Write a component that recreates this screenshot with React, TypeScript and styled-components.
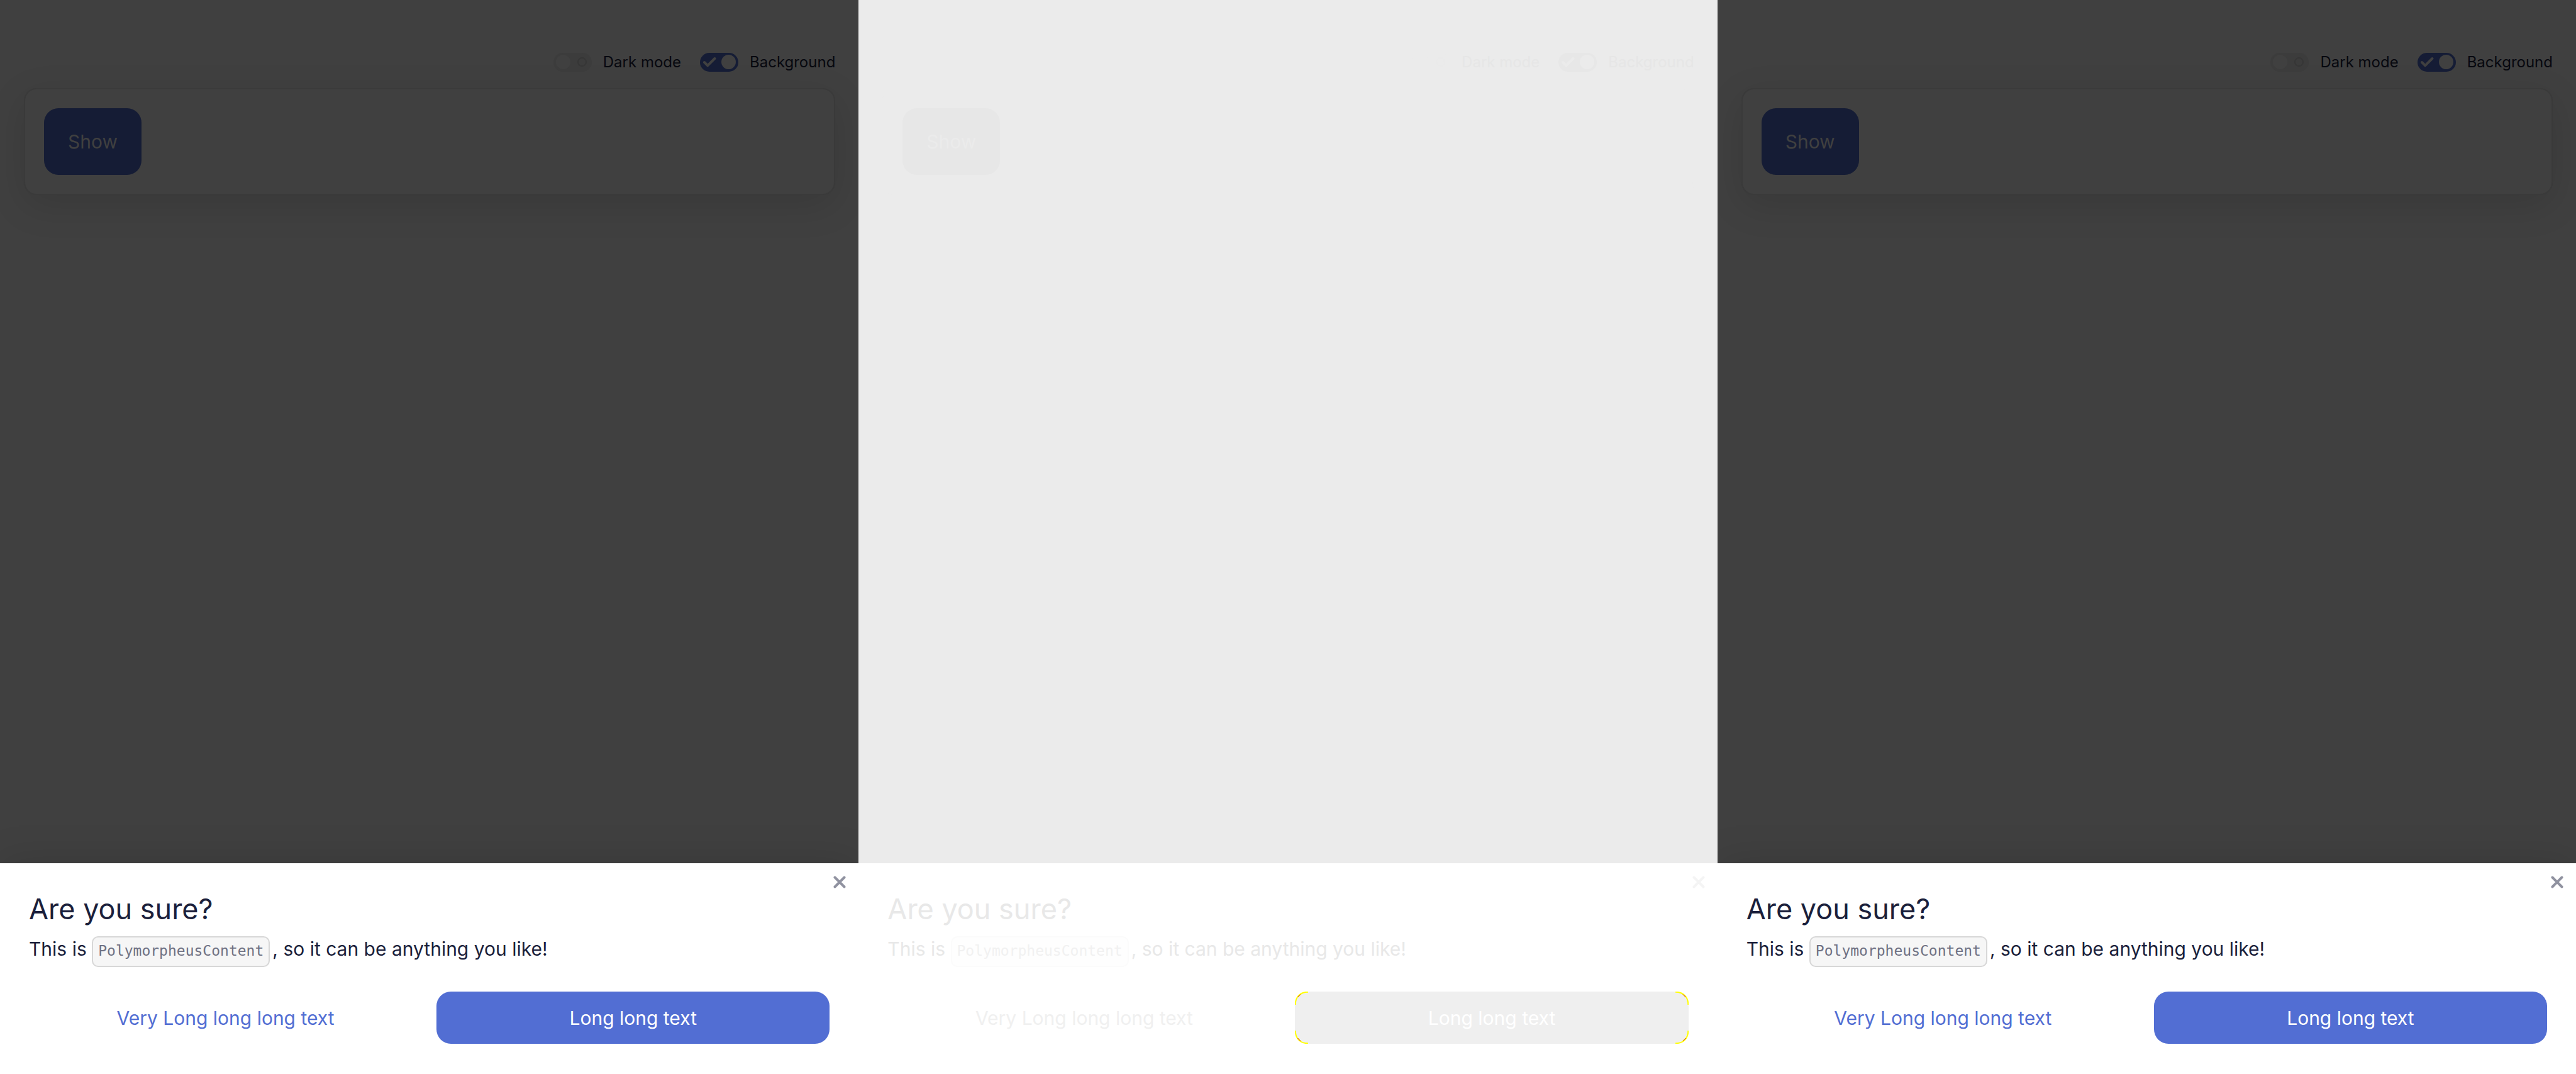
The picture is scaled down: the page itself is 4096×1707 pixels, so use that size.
import React from "react";
import styled, { createGlobalStyle, ThemeProvider } from "styled-components";

const sans = '"Inter", "Liberation Sans", sans-serif';
const mono = '"DejaVu Sans Mono", "Liberation Mono", monospace';

const dark = {
  page: "#404040",
  cardLine: "#3a3a3a",
  shadow: "rgba(0, 0, 0, 0.12)",
  show: "#151c35",
  showText: "#404040",
  label: "#07080f",
  trackOff: "#3c3c3c",
  ring: "#363636",
  knob: "#404040",
  trackOn: "#151c35",
  title: "#1b1f3b",
  close: "#9092a0",
  codeText: "#6f7183",
  codeBg: "#f6f6f6",
  codeLine: "#d7d7d7",
  link: "#526ed3",
  primary: "#526ed3",
  primaryText: "#ffffff",
  corner: "transparent",
};

const pale = {
  page: "#ebebeb",
  cardLine: "#ebebeb",
  shadow: "transparent",
  show: "#e7e7e7",
  showText: "#ebebeb",
  label: "#e6e6e6",
  trackOff: "#ebebeb",
  ring: "#eaeaea",
  knob: "#ebebeb",
  trackOn: "#e7e7e7",
  title: "#e8e8e8",
  close: "#f4f4f4",
  codeText: "#f1f1f1",
  codeBg: "#fefefe",
  codeLine: "#fbfbfb",
  link: "#f0f0f0",
  primary: "#efefef",
  primaryText: "#ffffff",
  corner: "#ffff00",
};

type Palette = typeof dark;

const GlobalStyle = createGlobalStyle`
  * { box-sizing: border-box; }
  body { margin: 0; font-family: ${sans}; background: #ffffff; }
  button { border: 0; padding: 0; font-family: inherit; cursor: pointer; }
`;

const Board = styled.main`
  display: grid;
  grid-template-columns: repeat(3, 1fr);
  min-height: 100vh;
`;

const Screen = styled.section`
  display: flex;
  flex-direction: column;
  min-width: 0;
  overflow: hidden;
  background: ${({ theme }) => theme.page};
`;

const Stage = styled.div`
  flex: 1;
  display: flex;
  flex-direction: column;
  gap: 23px;
  padding: 80px 37px 0 38px;
`;

const Toggles = styled.div`
  display: flex;
  justify-content: flex-end;
  gap: 30px;
  height: 37px;
`;

const ToggleLabel = styled.label`
  display: flex;
  align-items: center;
  gap: 18px;
  font-size: 24px;
  line-height: 37px;
  color: ${({ theme }) => theme.label};
`;

const Track = styled.span<{ $on: boolean }>`
  position: relative;
  display: flex;
  align-items: center;
  flex-direction: ${({ $on }) => ($on ? "row-reverse" : "row")};
  justify-content: space-between;
  width: 61px;
  height: 30px;
  padding: 0 4px;
  border-radius: 15px;
  background: ${({ theme, $on }) => ($on ? theme.trackOn : theme.trackOff)};
`;

const HiddenCheck = styled.input`
  position: absolute;
  inset: 0;
  width: 100%;
  height: 100%;
  margin: 0;
  opacity: 0;
`;

const Knob = styled.span`
  width: 23px;
  height: 23px;
  border-radius: 50%;
  background: ${({ theme }) => theme.knob};
`;

const Ring = styled.span`
  width: 15px;
  height: 15px;
  margin-right: 4px;
  border: 2px solid ${({ theme }) => theme.ring};
  border-radius: 50%;
`;

const Tick = styled.svg`
  width: 22px;
  height: 22px;
  fill: none;
  stroke: ${({ theme }) => theme.knob};
  stroke-width: 4;
  stroke-linecap: round;
  stroke-linejoin: round;
`;

const Card = styled.div`
  padding: 30px;
  border: 2px solid ${({ theme }) => theme.cardLine};
  border-radius: 20px;
  background: ${({ theme }) => theme.page};
  box-shadow: 0 16px 60px ${({ theme }) => theme.shadow};
`;

const ShowButton = styled.button`
  display: block;
  height: 106px;
  padding: 0 38px;
  border-radius: 23px;
  background: ${({ theme }) => theme.show};
  color: ${({ theme }) => theme.showText};
  font-size: 30px;
  line-height: 46px;
`;

const Sheet = styled.div`
  position: relative;
  padding: 45px 46px 48px;
  background: #ffffff;
  box-shadow: 0 -4px 60px ${({ theme }) => theme.shadow};
`;

const CloseButton = styled.button`
  position: absolute;
  top: 15px;
  right: 15px;
  display: grid;
  place-items: center;
  width: 30px;
  height: 30px;
  background: transparent;
`;

const Cross = styled.svg`
  width: 20px;
  height: 20px;
  stroke: ${({ theme }) => theme.close};
  stroke-width: 4;
  stroke-linecap: round;
`;

const Title = styled.h2`
  margin: 0;
  font-size: 45px;
  font-weight: 400;
  line-height: 56px;
  color: ${({ theme }) => theme.title};
`;

const Message = styled.p`
  margin: 15px 0 0;
  font-size: 30px;
  line-height: 40px;
  color: ${({ theme }) => theme.title};
`;

const Code = styled.code`
  display: inline-block;
  margin-right: 4px;
  padding: 0 8px 2px;
  border: 2px solid ${({ theme }) => theme.codeLine};
  border-radius: 10px;
  background: ${({ theme }) => theme.codeBg};
  color: ${({ theme }) => theme.codeText};
  font-family: ${mono};
  font-size: 23px;
  line-height: 43px;
`;

const Actions = styled.div`
  display: grid;
  grid-template-columns: 1fr 1fr;
  gap: 23px;
  margin-top: 39px;
`;

const Action = styled.button<{ $primary?: boolean }>`
  height: 83px;
  border-radius: 23px;
  font-size: 30px;
  line-height: 46px;
  background: ${({ theme, $primary }) => ($primary ? theme.primary : "transparent")};
  color: ${({ theme, $primary }) => ($primary ? theme.primaryText : theme.link)};
`;

const PrimaryWrap = styled.div`
  position: relative;
  display: grid;
`;

const Corner = styled.svg<{ $right?: boolean; $bottom?: boolean }>`
  position: absolute;
  top: ${({ $bottom }) => ($bottom ? "auto" : 0)};
  bottom: ${({ $bottom }) => ($bottom ? 0 : "auto")};
  left: ${({ $right }) => ($right ? "auto" : 0)};
  right: ${({ $right }) => ($right ? 0 : "auto")};
  width: 21px;
  height: 21px;
  transform: scale(${({ $right }) => ($right ? -1 : 1)}, ${({ $bottom }) => ($bottom ? -1 : 1)});
  fill: none;
  stroke: ${({ theme }) => theme.corner};
  stroke-width: 2;
  pointer-events: none;
`;

function Toggle({ label, on }: { label: string; on: boolean }) {
  return (
    <ToggleLabel>
      <Track $on={on}>
        <HiddenCheck type="checkbox" defaultChecked={on} />
        <Knob />
        {on ? (
          <Tick viewBox="0 0 22 22" aria-hidden="true">
            <path d="M3 11L8.300 16.200L19.400 5" />
          </Tick>
        ) : (
          <Ring />
        )}
      </Track>
      {label}
    </ToggleLabel>
  );
}

function CornerMark({ right, bottom }: { right?: boolean; bottom?: boolean }) {
  return (
    <Corner viewBox="0 0 21 21" $right={right} $bottom={bottom} aria-hidden="true">
      <path d="M0.700 21C0.700 8.500 8.500 0.700 21 0.700" />
      <path d="M4.500 9L9 4.500" stroke="#d42a00" strokeWidth="1" />
    </Corner>
  );
}

function Preview({ palette, marked }: { palette: Palette; marked?: boolean }) {
  return (
    <ThemeProvider theme={palette}>
      <Screen>
        <Stage>
          <Toggles>
            <Toggle label="Dark mode" on={false} />
            <Toggle label="Background" on />
          </Toggles>
          <Card>
            <ShowButton type="button">Show</ShowButton>
          </Card>
        </Stage>
        <Sheet role="dialog" aria-label="Are you sure?">
          <CloseButton type="button" aria-label="Close">
            <Cross viewBox="0 0 20 20" aria-hidden="true">
              <path d="M2.500 2.500L17.500 17.500M17.500 2.500L2.500 17.500" />
            </Cross>
          </CloseButton>
          <Title>Are you sure?</Title>
          <Message>
            This is <Code>PolymorpheusContent</Code>, so it can be anything you like!
          </Message>
          <Actions>
            <Action type="button">Very Long long long text</Action>
            <PrimaryWrap>
              <Action type="button" $primary>
                Long long text
              </Action>
              {marked && (
                <>
                  <CornerMark />
                  <CornerMark right />
                  <CornerMark bottom />
                  <CornerMark right bottom />
                </>
              )}
            </PrimaryWrap>
          </Actions>
        </Sheet>
      </Screen>
    </ThemeProvider>
  );
}

export default function App() {
  return (
    <>
      <GlobalStyle />
      <Board>
        <Preview palette={dark} />
        <Preview palette={pale} marked />
        <Preview palette={dark} />
      </Board>
    </>
  );
}
